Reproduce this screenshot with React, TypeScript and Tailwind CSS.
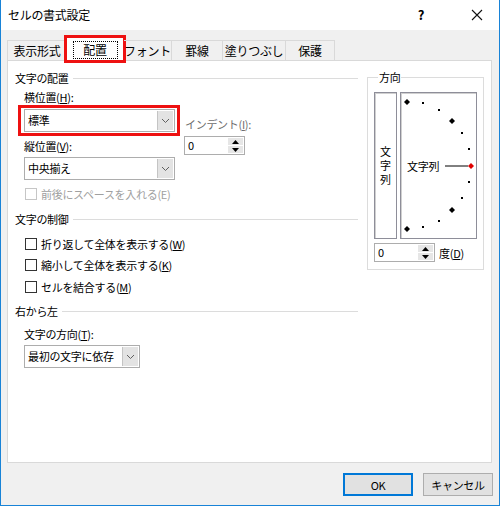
import React from 'react';

const Chevron: React.FC = () => (
    <svg width="9" height="6" viewBox="0 0 9 6">
        <polyline points="1,1 4.5,4.5 8,1" fill="none" stroke="#606060" strokeWidth="1" />
    </svg>
);

const Combo: React.FC<{ value: string; width: string }> = ({ value, width }) => (
    <div className={`${width} h-[23px] bg-white border border-[#adadad] flex items-stretch`}>
        <div className="flex-1 flex items-center pl-[3px] leading-none whitespace-nowrap">{value}</div>
        <div className="w-[16px] my-[1px] mr-[1px] bg-[#e3e3e3] border-l border-[#c4c4c4] flex items-center justify-center">
            <Chevron />
        </div>
    </div>
);

const Spin: React.FC<{ value: string }> = ({ value }) => (
    <div className="w-[61px] h-[19px] bg-white border border-[#adadad] flex items-stretch">
        <div className="flex-1 flex items-center pl-[3px] leading-none">{value}</div>
        <div className="w-[15px] my-[1px] mr-[1px] flex flex-col gap-[1px]">
            <div className="flex-1 bg-[#e6e6e6] flex items-center justify-center">
                <svg width="7" height="4" viewBox="0 0 7 4"><polygon points="3.5,0 7,4 0,4" fill="#000" /></svg>
            </div>
            <div className="flex-1 bg-[#e6e6e6] flex items-center justify-center">
                <svg width="7" height="4" viewBox="0 0 7 4"><polygon points="0,0 7,0 3.5,4" fill="#000" /></svg>
            </div>
        </div>
    </div>
);

const GroupHeader: React.FC<{ label: string; className?: string }> = ({ label, className = '' }) => (
    <div className={`flex items-center h-[16px] ${className}`}>
        <span className="whitespace-nowrap">{label}</span>
        <div className="flex-1 h-px bg-[#dcdcdc] ml-[4px]" />
    </div>
);

const Check: React.FC<{ children: React.ReactNode; disabled?: boolean; className?: string }> = ({ children, disabled, className = '' }) => (
    <div className={`flex items-center h-[16px] pl-[10px] ${className}`}>
        <div className={`w-[12px] h-[12px] bg-white border ${disabled ? 'border-[#c6c6c6]' : 'border-[#333]'}`} />
        <span className={`ml-[4px] whitespace-nowrap ${disabled ? 'text-[#a0a0a0]' : ''}`}>{children}</span>
    </div>
);

const Diamond: React.FC<{ x: number; y: number; fill?: string }> = ({ x, y, fill = '#000' }) => (
    <polygon points={`${x},${y - 3} ${x + 3},${y} ${x},${y + 3} ${x - 3},${y}`} fill={fill} />
);

const Dot: React.FC<{ x: number; y: number }> = ({ x, y }) => <rect x={x - 1} y={y - 1} width="2" height="2" fill="#000" />;

const tabs = ['表示形式', '配置', 'フォント', '罫線', '塗りつぶし', '保護'];
const tabWidths = ['w-[59px]', 'w-[58px]', 'w-[47px]', 'w-[51px]', 'w-[63px]', 'w-[50px]'];

export default function App() {
    return (
        <div className="w-[500px] h-[506px] bg-[#f0f0f0] border-x border-b border-[#1883d7] flex flex-col font-['Noto_Sans_CJK_JP','Liberation_Sans',sans-serif] text-[11px] tracking-[-0.3px] leading-[16px] text-black">
            {/* title bar */}
            <div className="h-[30px] bg-white flex items-center pl-[7px] shrink-0">
                <span className="flex-1 text-[12px]">セルの書式設定</span>
                <span className="w-[20px] text-center font-bold text-[13px] mr-[24px]">?</span>
                <div className="w-[44px] flex justify-center">
                    <svg width="12" height="12" viewBox="0 0 12 12">
                        <path d="M1 1 L11 11 M11 1 L1 11" stroke="#111" strokeWidth="1.1" />
                    </svg>
                </div>
            </div>

            {/* tabs */}
            <div className="mt-[10px] ml-[6px] h-[20px] flex items-end relative z-10">
                {tabs.map((t, i) =>
                    i === 1 ? (
                        <div key={t} className={`${tabWidths[i]} h-[24px] -mb-[1px] bg-white border-x border-t border-[#d9d9d9] outline-[3px] outline-[#ee1111] outline-offset-[-1px] flex items-center justify-center`}>
                            <span className="w-[45px] h-[18px] border border-dotted border-black flex items-center justify-center text-[12px]">{t}</span>
                        </div>
                    ) : (
                        <div key={t} className={`${tabWidths[i]} h-[20px] border-t ${i === 2 ? '' : 'border-l'} ${i === 5 ? 'border-r' : ''} border-[#d9d9d9] flex items-center justify-center whitespace-nowrap text-[12px]`}>
                            {t}
                        </div>
                    )
                )}
            </div>

            {/* panel */}
            <div className="ml-[6px] w-[485px] h-[403px] bg-white border border-[#d9d9d9] flex items-start pt-[9px] pl-[7px] shrink-0">
                <div className="w-[343px] flex flex-col">
                    <GroupHeader label="文字の配置" />
                    <div className="pl-[9px] mt-[3px]">横位置(<u>H</u>):</div>
                    <div className="flex items-start pl-[9px] mt-[4px]">
                        <div className="flex flex-col">
                            <div className="relative">
                                <Combo value="標準" width="w-[151px]" />
                                <div className="absolute -left-[6px] -right-[5px] -top-[4px] -bottom-[4px] border-[3px] border-[#ee1111]" />
                            </div>
                            <div className="mt-[6px]">縦位置(<u>V</u>):</div>
                            <div className="mt-[3px]">
                                <Combo value="中央揃え" width="w-[151px]" />
                            </div>
                        </div>
                        <div className="ml-[9px] pt-[7px] flex flex-col">
                            <div className="pl-[1px] text-[#6d6d6d] whitespace-nowrap">インデント(<u>I</u>):</div>
                            <div className="mt-[4px]">
                                <Spin value="0" />
                            </div>
                        </div>
                    </div>
                    <Check disabled className="mt-[6px]">前後にスペースを入れる(E)</Check>

                    <GroupHeader label="文字の制御" className="mt-[9px]" />
                    <Check className="mt-[9px]">折り返して全体を表示する(<u>W</u>)</Check>
                    <Check className="mt-[5px]">縮小して全体を表示する(<u>K</u>)</Check>
                    <Check className="mt-[6px]">セルを結合する(<u>M</u>)</Check>

                    <GroupHeader label="右から左" className="mt-[8px]" />
                    <div className="pl-[9px] mt-[7px]">文字の方向(<u>T</u>):</div>
                    <div className="pl-[9px] mt-[3px]">
                        <Combo value="最初の文字に依存" width="w-[116px]" />
                    </div>
                </div>

                <fieldset className="ml-[9px] -mt-[1px] w-[117px] border border-[#dcdcdc] pl-[6px] pb-[7px]">
                    <legend className="ml-[4px] px-[1px]">方向</legend>
                    <div className="flex mt-[7px]">
                        <div className="w-[23px] h-[147px] border border-[#8e8e99] shadow-[inset_1px_1px_0_#d0d0d0] flex items-center justify-center">
                            <span className="[writing-mode:vertical-rl] tracking-[3px] leading-[12px] pt-[3px]">文字列</span>
                        </div>
                        <div className="ml-[3px] w-[77px] h-[147px] border border-[#8e8e99] shadow-[inset_1px_1px_0_#d0d0d0] relative flex items-center">
                            <span className="pl-[6px] whitespace-nowrap">文字列</span>
                            <svg className="absolute -left-px -top-px" width="77" height="147" viewBox="0 0 77 147">
                                <line x1="45" y1="74" x2="68" y2="74" stroke="#000" strokeWidth="1" />
                                <Diamond x={7} y={10} />
                                <Dot x={23} y={11} />
                                <Dot x={39} y={18} />
                                <Diamond x={52} y={29} />
                                <Dot x={62} y={41} />
                                <Dot x={69} y={57} />
                                <Diamond x={71} y={74} fill="#e00000" />
                                <Dot x={69} y={90} />
                                <Dot x={62} y={106} />
                                <Diamond x={52} y={118} />
                                <Dot x={39} y={129} />
                                <Dot x={23} y={135} />
                                <Diamond x={7} y={137} />
                            </svg>
                        </div>
                    </div>
                    <div className="flex items-center mt-[4px]">
                        <Spin value="0" />
                        <span className="ml-[4px] whitespace-nowrap">度(<u>D</u>)</span>
                    </div>
                </fieldset>
            </div>

            {/* buttons */}
            <div className="flex justify-end gap-[10px] mt-[10px] pr-[6px]">
                <button className="w-[70px] h-[23px] bg-[#e1e1e1] border border-[#0078d7] shadow-[inset_0_0_0_1px_#0078d7]">OK</button>
                <button className="w-[70px] h-[23px] bg-[#e1e1e1] border border-[#adadad] whitespace-nowrap">キャンセル</button>
            </div>
        </div>
    );
}
